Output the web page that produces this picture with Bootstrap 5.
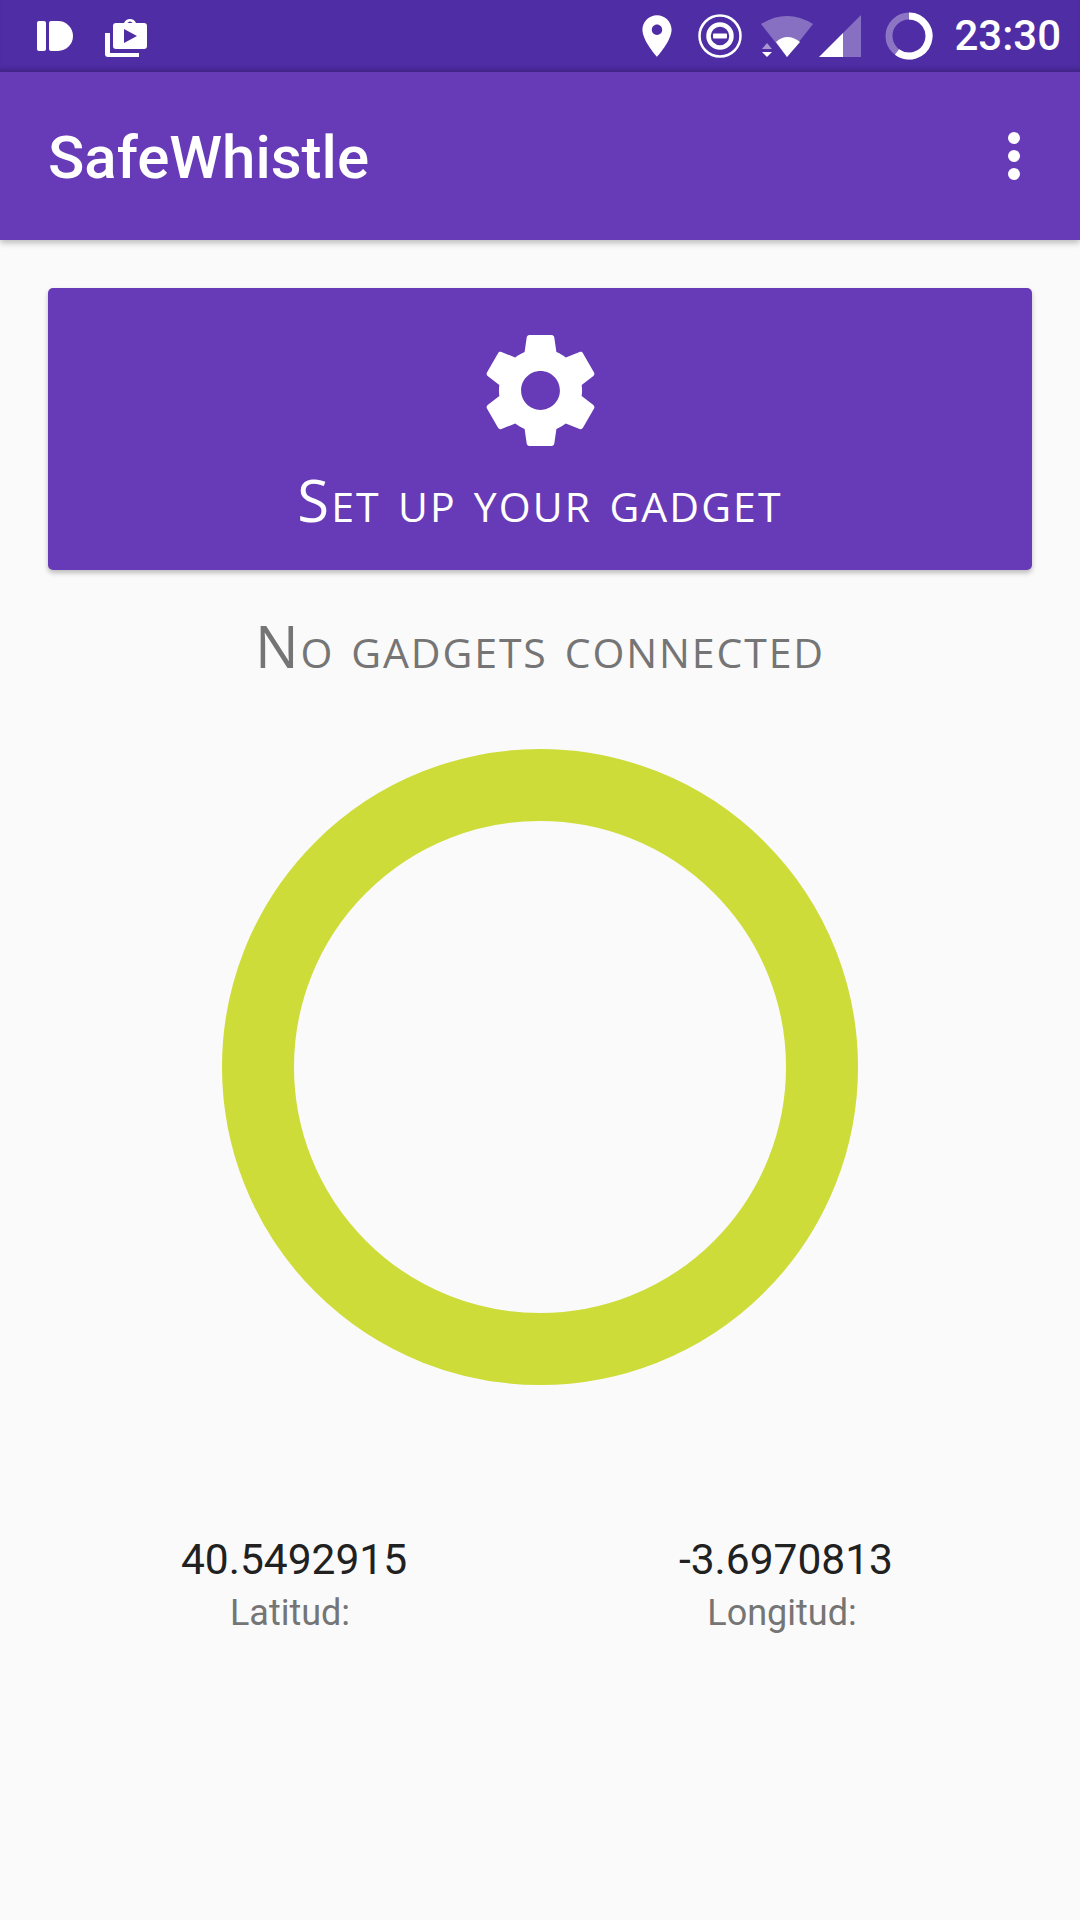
<!DOCTYPE html>
<html lang="en">
<head>
  <meta charset="UTF-8" />
  <meta name="viewport" content="width=device-width, initial-scale=1" />
  <title>SafeWhistle</title>
  <link href="https://cdn.jsdelivr.net/npm/bootstrap@5.3.0/dist/css/bootstrap.min.css" rel="stylesheet" />
  <style>
    body {
      background: #fafafa;
      font-family: Roboto, "Liberation Sans", sans-serif;
      height: 1920px;
      overflow: hidden;
    }

    .status-bar {
      height: 72px;
      background: #4f2da5;
      box-shadow: inset 0 -6px 6px -4px rgba(0, 0, 0, 0.22);
      color: #fff;
      padding: 0 19px 0 36px;
    }

    .status-time {
      font-size: 42px;
      font-weight: 500;
      line-height: 72px;
    }

    .ic-briefcase { margin-left: 31px; }
    .ic-dnd { margin-left: 16px; }
    .ic-wifi { margin-left: 17px; }
    .ic-signal { margin-left: 3px; }
    .ic-battery { margin-left: 23px; margin-right: 21px; }

    .app-bar {
      height: 168px;
      background: #673ab7;
      color: #fff;
      padding: 4px 60px 0 48px;
      box-shadow: 0 3px 6px rgba(0, 0, 0, 0.25);
      position: relative;
    }

    .app-title {
      font-size: 60px;
      font-weight: 500;
      line-height: 1;
      margin: 0;
    }

    .dots {
      width: 12px;
      gap: 6px;
      margin-bottom: 4px;
    }

    .dots span {
      width: 12px;
      height: 12px;
      border-radius: 50%;
      background: #fff;
    }

    .setup-card {
      margin: 48px 48px 0;
      height: 282px;
      background: #673ab7;
      color: #fff;
      border: 0;
      border-radius: 5px;
      box-shadow: 0 3px 5px rgba(0, 0, 0, 0.25);
      padding-top: 36px;
    }

    .caps-text {
      font-family: "Open Sans", Lato, sans-serif;
      font-variant: small-caps;
      font-weight: 400;
      font-size: 58px;
      line-height: 66px;
    }

    .setup-card .caps-text {
      margin-top: 10px;
      letter-spacing: 2.100px;
    }

    .no-gadgets {
      color: #757575;
      margin-top: 43px;
      letter-spacing: 1.900px;
    }

    .ring-wrap {
      margin-top: 70px;
    }

    .ring-shape {
      width: 636px;
      height: 636px;
      border: 72px solid #cddc39;
      border-radius: 50%;
    }

    .coords {
      margin: 150px 48px 0;
    }

    .coord-value {
      font-size: 42.500px;
      line-height: 50px;
      color: #212121;
    }

    .coord-label {
      font-size: 36px;
      line-height: 42px;
      margin-top: 7px;
      color: #757575;
      padding-right: 8px;
    }
  </style>
</head>
<body>
  <div class="status-bar d-flex align-items-center">
    <svg width="38" height="30" viewBox="0 0 38 30">
      <rect x="1" y="0" width="9" height="30" rx="2" fill="#fff" />
      <path d="M13 2a2 2 0 0 1 2-2h7a15 15 0 0 1 0 30h-7a2 2 0 0 1-2-2z" fill="#fff" />
    </svg>
    <svg class="ic-briefcase" width="44" height="44" viewBox="105 14 44 44">
      <path fill="#fff" d="M105 33h5v20h29v4h-31a3 3 0 0 1-3-3z" />
      <path fill="#fff" fill-rule="evenodd" d="M116 23h8a6.500 6.500 0 0 1 12 0h8a3 3 0 0 1 3 3v20a3 3 0 0 1-3 3h-28a3 3 0 0 1-3-3v-20a3 3 0 0 1 3-3zM127.500 23h5a2.800 2.800 0 0 0-5 0zM124 29v14l13-7z" />
    </svg>

    <div class="ms-auto d-flex align-items-center">
      <svg width="50" height="50" viewBox="0 0 24 24">
        <path fill="#fff" d="M12 2C8.130 2 5 5.130 5 9c0 5.250 7 13 7 13s7-7.750 7-13c0-3.870-3.130-7-7-7zm0 9.500c-1.380 0-2.500-1.120-2.500-2.500s1.120-2.500 2.500-2.500 2.500 1.120 2.500 2.500-1.120 2.500-2.500 2.500z" />
      </svg>
      <svg class="ic-dnd" width="44" height="44" viewBox="0 0 44 44">
        <circle cx="22" cy="22" r="20.500" fill="none" stroke="#fff" stroke-width="2.500" />
        <circle cx="22" cy="22" r="11.500" fill="none" stroke="#fff" stroke-width="4.500" />
        <rect x="15" y="19.500" width="14" height="5" rx="1" fill="#fff" />
      </svg>
      <svg class="ic-wifi" width="56" height="44" viewBox="0 0 56 44">
        <path fill="#fff" fill-opacity=".32" d="M2 10Q28-6 54 10L28 43z" />
        <path fill="#fff" d="M17 28Q28 18 41 28L28 43z" />
        <path fill="#fff" fill-opacity=".5" d="M8 29l-5 6h10z" />
        <path fill="#fff" d="M3 38h10l-5 5z" />
      </svg>
      <svg class="ic-signal" width="44" height="44" viewBox="0 0 44 44">
        <path fill="#fff" fill-opacity=".32" d="M43 1v42H25V19z" />
        <path fill="#fff" d="M1 43L25 19v24z" />
      </svg>
      <svg class="ic-battery" width="48" height="48" viewBox="0 0 48 48">
        <circle cx="24" cy="24" r="20" fill="none" stroke="#fff" stroke-opacity=".35" stroke-width="7" />
        <path d="M24 4A20 20 0 1 1 12 40" fill="none" stroke="#fff" stroke-width="7" />
      </svg>
      <span class="status-time">23:30</span>
    </div>
  </div>

  <header class="app-bar d-flex align-items-center justify-content-between">
    <h1 class="app-title">SafeWhistle</h1>
    <div class="dots d-flex flex-column"><span></span><span></span><span></span></div>
  </header>

  <div class="card setup-card align-items-center">
    <svg width="133" height="133" viewBox="0 0 24 24">
      <path fill="#fff" d="M19.430 12.980c.04-.32.07-.64.07-.98s-.03-.66-.07-.98l2.110-1.650c.19-.15.24-.42.12-.64l-2-3.460c-.12-.22-.39-.3-.61-.22l-2.490 1c-.52-.4-1.080-.73-1.690-.98l-.38-2.650C14.460 2.180 14.250 2 14 2h-4c-.25 0-.46.18-.49.42l-.38 2.650c-.61.25-1.170.59-1.690.98l-2.490-1c-.23-.09-.49 0-.61.22l-2 3.460c-.13.22-.07.49.12.64l2.110 1.650c-.04.32-.07.65-.07.98s.03.66.07.98l-2.110 1.650c-.19.15-.24.42-.12.64l2 3.460c.12.22.39.3.61.22l2.490-1c.52.4 1.080.73 1.690.98l.38 2.650c.03.24.24.42.49.42h4c.25 0 .46-.18.49-.42l.38-2.650c.61-.25 1.170-.59 1.690-.98l2.490 1c.23.09.49 0 .61-.22l2-3.460c.12-.22.07-.49-.12-.64l-2.110-1.650zM12 15.500c-1.930 0-3.500-1.570-3.500-3.500s1.570-3.500 3.500-3.500 3.500 1.570 3.500 3.500-1.570 3.500-3.500 3.500z" />
    </svg>
    <div class="caps-text">Set up your gadget</div>
  </div>

  <div class="caps-text no-gadgets text-center">No gadgets connected</div>

  <div class="ring-wrap d-flex justify-content-center">
    <div class="ring-shape"></div>
  </div>

  <div class="row g-0 coords text-center">
    <div class="col-6">
      <div class="coord-value">40.5492915</div>
      <div class="coord-label">Latitud:</div>
    </div>
    <div class="col-6">
      <div class="coord-value">-3.6970813</div>
      <div class="coord-label">Longitud:</div>
    </div>
  </div>

  <script src="https://cdn.jsdelivr.net/npm/bootstrap@5.3.0/dist/js/bootstrap.bundle.min.js"></script>
</body>
</html>
